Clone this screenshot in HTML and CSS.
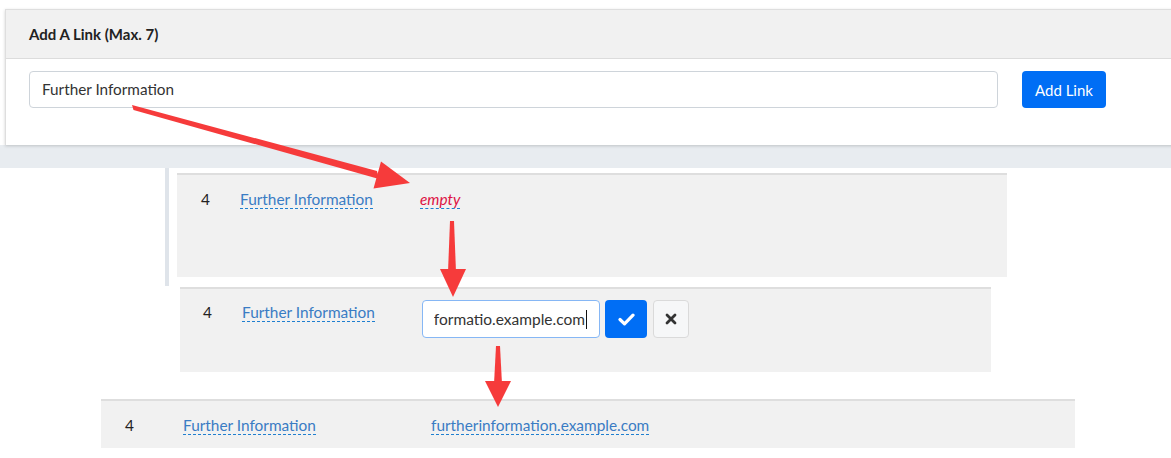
FILE: index.html
```html
<!DOCTYPE html>
<html lang="en">
<head>
<meta charset="utf-8">
<title>Add A Link</title>
<link rel="stylesheet" href="styles.css">
</head>
<body>
<div class="page">
  <section class="card">
    <div class="card-header">Add A Link (Max. 7)</div>
    <div class="card-body">
      <div class="text-input">Further Information</div>
      <button class="btn-primary" type="button">Add Link</button>
    </div>
  </section>
  <div class="band"></div>

  <div class="stack">
    <div class="row row-a">
      <span class="num">4</span>
      <span class="label"><a class="editable">Further Information</a></span>
      <span class="value"><a class="editable empty">empty</a></span>
    </div>
  </div>

  <div class="row row-b">
    <span class="num">4</span>
    <span class="label"><a class="editable">Further Information</a></span>
    <div class="edit-field">
      <div class="edit-clip"><span>furtherinformatio.example.com</span><span class="caret"></span></div>
    </div>
    <button class="btn-ok" type="button" aria-label="Save">
      <svg width="17" height="13" viewBox="0 0 17 13"><polyline points="2,6.5 6.5,10.8 15,2.2" fill="none" stroke="#fff" stroke-width="3.2" stroke-linecap="round" stroke-linejoin="round"/></svg>
    </button>
    <button class="btn-cancel" type="button" aria-label="Cancel">
      <svg width="12" height="12" viewBox="0 0 12 12"><path d="M2 2 L10 10 M10 2 L2 10" stroke="#333" stroke-width="2.8" stroke-linecap="round"/></svg>
    </button>
  </div>

  <div class="row row-c">
    <span class="num">4</span>
    <span class="label"><a class="editable">Further Information</a></span>
    <span class="value"><a class="editable">furtherinformation.example.com</a></span>
  </div>

  <svg class="arrows" width="1171" height="458" viewBox="0 0 1171 458">
    <g fill="#f63b3b">
      <polygon points="132,105 133.5,110 379,179 377,171"/>
      <polygon points="410,183 373.5,188.5 381,161.5"/>
      <polygon points="450,221 454,221 456,272 448,272"/>
      <polygon points="440,269 466,269 453,297"/>
      <polygon points="496,346 500,346 502,384 494,384"/>
      <polygon points="485,381 511,381 498,407"/>
    </g>
  </svg>
</div>
</body>
</html>
```

FILE: styles.css
```css
html, body {
  margin: 0;
  padding: 0;
  background: #fff;
}

body {
  font-family: Lato, "Liberation Sans", sans-serif;
  color: #212529;
}

.page {
  position: relative;
  width: 1171px;
  height: 458px;
  overflow: hidden;
  padding-top: 9px;
  box-sizing: border-box;
}

.card {
  margin-left: 5px;
  width: 1200px;
  border: 1px solid #dedede;
  border-bottom: none;
  background: #fff;
  box-shadow: 0 1px 3px rgba(0, 0, 0, 0.18);
  position: relative;
  z-index: 1;
}

.card-header {
  height: 48px;
  line-height: 48px;
  padding-left: 23px;
  background: #f1f1f1;
  border-bottom: 1px solid #dcdcdc;
  font-size: 15px;
  font-weight: 700;
  color: #222;
}

.card-body {
  display: flex;
  align-items: flex-start;
  padding: 12px 0 37px 23px;
  height: 37px;
}

.text-input {
  width: 955px;
  height: 35px;
  border: 1px solid #ced4da;
  border-radius: 4px;
  padding-left: 12px;
  font-size: 15.3px;
  line-height: 35px;
  color: #333;
}

.btn-primary {
  margin-left: 24px;
  width: 84px;
  height: 37px;
  border: none;
  border-radius: 4px;
  background: #006ef5;
  color: #fff;
  font-family: Lato, "Liberation Sans", sans-serif;
  font-size: 15px;
  padding: 0;
}

.band {
  height: 23px;
  background: #e8ecf0;
}

.stack {
  margin-left: 165px;
  width: 842px;
  border-left: 4px solid #dfe4ea;
  padding: 5px 0 9px 8px;
}

.row {
  display: flex;
  align-items: flex-start;
  background: #f1f1f1;
  border-top: 2px solid #dedede;
  padding-left: 24px;
  box-sizing: border-box;
  font-size: 15.4px;
  line-height: 20px;
}

.num {
  width: 39px;
  flex: none;
  color: #222;
}

.label {
  width: 180px;
  flex: none;
}

.editable {
  color: #3a7cc4;
  border-bottom: 1px dashed #1f7fd0;
  text-decoration: none;
}

.editable.empty {
  color: #dd1144;
  font-style: italic;
}

.row-a {
  width: 830px;
  height: 104px;
  padding-top: 14px;
}

.row-b {
  margin-left: 180px;
  margin-top: 1px;
  width: 811px;
  height: 85px;
  padding-top: 11px;
  padding-left: 23px;
}

.row-b .num,
.row-b .label {
  margin-top: 2px;
}

.row-c {
  margin-left: 101px;
  margin-top: 27px;
  width: 974px;
  height: 49px;
  padding-top: 14px;
}

.row-c .num {
  width: 58px;
}

.row-c .label {
  width: 248px;
}

.edit-field {
  width: 153px;
  height: 36px;
  border: 1px solid #86b7f5;
  border-radius: 4px;
  background: #fff;
  padding: 0 12px 0 11px;
  flex: none;
}

.edit-clip {
  display: flex;
  justify-content: flex-end;
  align-items: center;
  height: 36px;
  overflow: hidden;
  white-space: nowrap;
  font-size: 15.5px;
  color: #333;
}

.caret {
  display: inline-block;
  width: 1px;
  height: 19px;
  background: #111;
  margin-left: 1px;
  flex: none;
}

.btn-ok {
  margin-left: 5px;
  width: 42px;
  height: 38px;
  border: none;
  border-radius: 4px;
  background: #006ef5;
  padding: 0;
  display: flex;
  align-items: center;
  justify-content: center;
}

.btn-cancel {
  margin-left: 6px;
  width: 36px;
  height: 38px;
  border: 1px solid #dadada;
  border-radius: 4px;
  background: #f6f7f8;
  padding: 0;
  display: flex;
  align-items: center;
  justify-content: center;
}

.arrows {
  position: absolute;
  left: 0;
  top: 0;
  pointer-events: none;
  z-index: 5;
}
```
